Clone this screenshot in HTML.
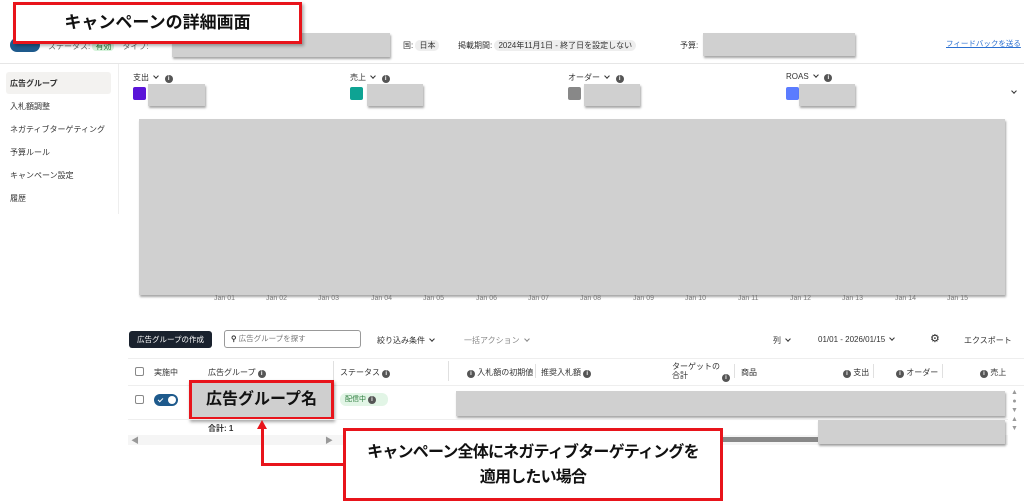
<!DOCTYPE html>
<html><head><meta charset="utf-8"><style>
*{margin:0;padding:0;box-sizing:border-box}
body{width:1024px;height:502px;overflow:hidden;background:#fff;font-family:"Liberation Sans","Noto Sans CJK JP",sans-serif;color:#333;position:relative}
.a{position:absolute;white-space:nowrap}
.s{font-size:8px;color:#333}
.g{background:#d0d0d0;box-shadow:1px 2px 2px rgba(0,0,0,.35)}
.i{display:inline-block;width:8px;height:8px;border-radius:50%;background:#555;color:#fff;font-size:6px;line-height:8px;text-align:center;font-weight:bold;vertical-align:0px}
.ch{display:inline-block;width:4px;height:4px;border-right:1.3px solid #333;border-bottom:1.3px solid #333;transform:rotate(45deg);margin-left:5px;vertical-align:2px}
.sw{width:13px;height:13px;border-radius:2px}
.ax{font-size:7px;color:#777;top:295px}
.cb{width:9px;height:9px;border:1px solid #888;border-radius:2px;background:#fff}
.sep{width:1px;background:#e0e0e0}
</style></head><body>

<div class="a" style="left:10px;top:38px;width:30px;height:14px;border-radius:7px;background:#1e5a8c"></div>
<div class="a s" style="left:48px;top:41px;color:#666">ステータス: <span style="background:#d6f3dc;color:#2a7a3b;padding:0 3px;border-radius:4px">有効</span>　タイプ:</div>
<div class="a g" style="left:172px;top:33px;width:218px;height:24px"></div>
<div class="a s" style="left:403px;top:40px">国: <span style="background:#eee;padding:1px 4px;border-radius:5px">日本</span></div>
<div class="a s" style="left:458px;top:40px">掲載期間: <span style="background:#eee;padding:1px 4px;border-radius:6px">2024年11月1日 - 終了日を設定しない</span></div>
<div class="a s" style="left:680px;top:40px">予算:</div>
<div class="a g" style="left:703px;top:33px;width:152px;height:23px"></div>
<div class="a" style="left:946px;top:38px;font-size:7.5px;color:#2a6fd0;text-decoration:underline">フィードバックを送る</div>
<div class="a" style="left:0;top:63px;width:1024px;height:1px;background:#e6e6e6"></div>

<div class="a" style="left:13px;top:2px;width:289px;height:42px;border:3px solid #e8141b;background:#fff;box-shadow:2px 2px 3px rgba(0,0,0,.3);font-weight:bold;font-size:17px;color:#111;text-align:center;line-height:36px">キャンペーンの詳細画面</div>

<div class="a" style="left:118px;top:64px;width:1px;height:150px;background:#eee"></div>
<div class="a" style="left:6px;top:72px;width:105px;height:22px;background:#f3f2f0;border-radius:3px"></div>
<div class="a s" style="left:10px;top:78px;font-weight:bold">広告グループ</div>
<div class="a s" style="left:10px;top:101px">入札額調整</div>
<div class="a s" style="left:10px;top:124px">ネガティブターゲティング</div>
<div class="a s" style="left:10px;top:147px">予算ルール</div>
<div class="a s" style="left:10px;top:170px">キャンペーン設定</div>
<div class="a s" style="left:10px;top:193px">履歴</div>

<div class="a s" style="left:133px;top:72px">支出<span class="ch"></span> &nbsp;&nbsp;<span class="i">i</span></div>
<div class="a sw" style="left:133px;top:87px;background:#5a14d8"></div>
<div class="a g" style="left:148px;top:84px;width:57px;height:22px"></div>
<div class="a s" style="left:350px;top:72px">売上<span class="ch"></span> &nbsp;&nbsp;<span class="i">i</span></div>
<div class="a sw" style="left:350px;top:87px;background:#0ea393"></div>
<div class="a g" style="left:367px;top:84px;width:56px;height:22px"></div>
<div class="a s" style="left:568px;top:72px">オーダー<span class="ch"></span> &nbsp;&nbsp;<span class="i">i</span></div>
<div class="a sw" style="left:568px;top:87px;background:#888"></div>
<div class="a g" style="left:584px;top:84px;width:56px;height:22px"></div>
<div class="a s" style="left:786px;top:72px">ROAS<span class="ch"></span> &nbsp;&nbsp;<span class="i">i</span></div>
<div class="a sw" style="left:786px;top:87px;background:#5b7cff"></div>
<div class="a g" style="left:799px;top:84px;width:56px;height:22px"></div>
<div class="a" style="left:1007px;top:82px"><span class="ch"></span></div>

<div class="a g" style="left:139px;top:119px;width:866px;height:176px"></div>
<div class="a ax" style="left:214px">Jan 01</div><div class="a ax" style="left:266px">Jan 02</div><div class="a ax" style="left:318px">Jan 03</div><div class="a ax" style="left:371px">Jan 04</div><div class="a ax" style="left:423px">Jan 05</div><div class="a ax" style="left:476px">Jan 06</div><div class="a ax" style="left:528px">Jan 07</div><div class="a ax" style="left:580px">Jan 08</div><div class="a ax" style="left:633px">Jan 09</div><div class="a ax" style="left:685px">Jan 10</div><div class="a ax" style="left:738px">Jan 11</div><div class="a ax" style="left:790px">Jan 12</div><div class="a ax" style="left:842px">Jan 13</div><div class="a ax" style="left:895px">Jan 14</div><div class="a ax" style="left:947px">Jan 15</div>

<div class="a" style="left:129px;top:331px;width:83px;height:17px;background:#1a222e;border-radius:3px;color:#fff;font-size:7.5px;text-align:center;line-height:17px">広告グループの作成</div>
<div class="a" style="left:224px;top:330px;width:137px;height:18px;border:1px solid #999;border-radius:3px;font-size:7.5px;color:#777;line-height:16px;padding-left:6px"><b style="color:#333">⚲</b> 広告グループを探す</div>
<div class="a s" style="left:377px;top:335px">絞り込み条件<span class="ch"></span></div>
<div class="a s" style="left:464px;top:335px;color:#888">一括アクション<span class="ch" style="border-color:#888"></span></div>
<div class="a s" style="left:773px;top:335px">列<span class="ch"></span></div>
<div class="a s" style="left:818px;top:335px">01/01 - 2026/01/15<span class="ch"></span></div>
<div class="a" style="left:930px;top:332px;font-size:11px;color:#222">⚙</div>
<div class="a s" style="left:964px;top:335px">エクスポート</div>

<div class="a" style="left:128px;top:358px;width:896px;height:1px;background:#eee"></div>
<div class="a cb" style="left:135px;top:367px"></div>
<div class="a s" style="left:154px;top:367px">実施中</div>
<div class="a s" style="left:208px;top:367px">広告グループ <span class="i">i</span></div>
<div class="a sep" style="left:333px;top:361px;height:20px"></div>
<div class="a s" style="left:340px;top:367px">ステータス <span class="i">i</span></div>
<div class="a sep" style="left:448px;top:361px;height:20px"></div>
<div class="a s" style="left:467px;top:367px"><span class="i">i</span> 入札額の初期値</div>
<div class="a sep" style="left:535px;top:364px;height:14px"></div>
<div class="a s" style="left:541px;top:367px">推奨入札額 <span class="i">i</span></div>
<div class="a s" style="left:672px;top:362px;line-height:9px">ターゲットの<br>合計</div>
<div class="a" style="left:722px;top:366px"><span class="i">i</span></div>
<div class="a sep" style="left:734px;top:364px;height:14px"></div>
<div class="a s" style="left:741px;top:367px">商品</div>
<div class="a s" style="left:843px;top:367px"><span class="i">i</span> 支出</div>
<div class="a sep" style="left:873px;top:364px;height:14px"></div>
<div class="a s" style="left:896px;top:367px"><span class="i">i</span> オーダー</div>
<div class="a sep" style="left:942px;top:364px;height:14px"></div>
<div class="a s" style="left:980px;top:367px"><span class="i">i</span> 売上</div>
<div class="a" style="left:128px;top:385px;width:896px;height:1px;background:#eee"></div>

<div class="a cb" style="left:135px;top:395px"></div>
<div class="a" style="left:154px;top:394px;width:24px;height:12px;border-radius:6px;background:#1e5a8c"><div style="position:absolute;right:2px;top:2px;width:8px;height:8px;border-radius:50%;background:#fff"></div><div style="position:absolute;left:5px;top:3px;width:3px;height:5px;border-right:1.2px solid #fff;border-bottom:1.2px solid #fff;transform:rotate(45deg)"></div></div>
<div class="a" style="left:189px;top:380px;width:145px;height:40px;border:3px solid #e8141b;background:#cfcfcf;box-shadow:1px 2px 3px rgba(0,0,0,.35);font-weight:bold;font-size:16px;color:#111;text-align:center;line-height:34px">広告グループ名</div>
<div class="a" style="left:340px;top:393px;width:48px;height:13px;border-radius:6px;background:#e2f5e6;font-size:7px;color:#2a7a3b;line-height:13px;padding-left:5px">配信中 <span class="i">i</span></div>
<div class="a g" style="left:456px;top:391px;width:549px;height:25px"></div>
<div class="a" style="left:128px;top:419px;width:880px;height:1px;background:#eee"></div>
<div class="a" style="left:1011px;top:388px;font-size:7px;color:#999;line-height:9px;text-align:center">▲<br>●<br>▼<br>▲<br>▼</div>

<div class="a s" style="left:208px;top:423px;font-weight:bold">合計: 1</div>
<div class="a" style="left:128px;top:435px;width:880px;height:10px;background:#f5f5f5"></div>
<div class="a" style="left:131px;top:435px;font-size:8px;color:#999">◀</div>
<div class="a" style="left:325px;top:435px;font-size:8px;color:#999">▶</div>
<div class="a" style="left:380px;top:437px;width:555px;height:5px;background:#888"></div>
<div class="a g" style="left:818px;top:420px;width:187px;height:24px"></div>

<div class="a" style="left:261px;top:428px;width:3px;height:38px;background:#e8141b"></div>
<div class="a" style="left:261px;top:463px;width:84px;height:3px;background:#e8141b"></div>
<div class="a" style="left:257px;top:420px;width:0;height:0;border-left:5.5px solid transparent;border-right:5.5px solid transparent;border-bottom:9px solid #e8141b"></div>

<div class="a" style="left:343px;top:428px;width:380px;height:73px;border:3px solid #e8141b;background:#fff;font-weight:bold;font-size:16px;color:#111;text-align:center;line-height:25px;padding-top:9px;letter-spacing:-0.8px">キャンペーン全体にネガティブターゲティングを<br>適用したい場合</div>
</body></html>
